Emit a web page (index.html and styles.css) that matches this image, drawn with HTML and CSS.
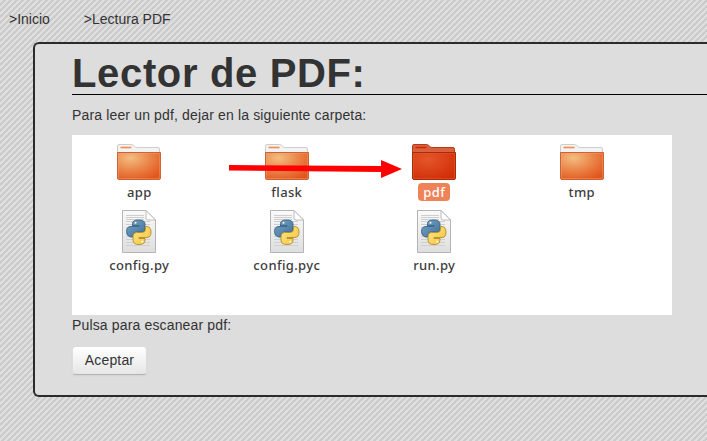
FILE: index.html
```
<!DOCTYPE html>
<html lang="es">
<head>
<meta charset="utf-8">
<title>Lector de PDF</title>
<link rel="stylesheet" href="styles.css">
</head>
<body>
<svg class="defs" width="0" height="0" aria-hidden="true">
  <defs>
    <radialGradient id="orange" cx=".3" cy=".2" r=".9"><stop offset="0" stop-color="#f3bd80"/><stop offset=".55" stop-color="#ea8145"/><stop offset="1" stop-color="#e2551c"/></radialGradient>
    <radialGradient id="red" cx=".35" cy=".25" r=".8"><stop offset="0" stop-color="#e4562a"/><stop offset="1" stop-color="#d22f08"/></radialGradient>
    <linearGradient id="paper" x2="0" y2="1"><stop offset="0" stop-color="#fafafa"/><stop offset="1" stop-color="#dedede"/></linearGradient>
    <linearGradient id="blue" x2="1" y2="1"><stop offset="0" stop-color="#78a5c6"/><stop offset="1" stop-color="#41719a"/></linearGradient>
    <linearGradient id="yellow" x2="1" y2="1"><stop offset="0" stop-color="#ffe68b"/><stop offset="1" stop-color="#f0c33c"/></linearGradient>
    <symbol id="folder" viewBox="0 0 46 38">
      <path d="M1.5 12V3Q1.5 1.5 3 1.5H15.500C18 1.500 18.500 4.500 21 4.500H42Q43.500 4.500 43.500 6V12Z" fill="#f3f3f3" stroke="#cdcdcd"/>
      <path d="M4.500 4.500H15.500" stroke="#f48b51" stroke-width="1.600"/>
      <path d="M1.500 9.500H44.500V35Q44.500 36.500 43 36.500H3Q1.500 36.500 1.500 35Z" fill="url(#orange)" stroke="#cc6237"/>
      <path d="M2.500 10.500H43.500V35.500H2.500Z" fill="none" stroke="#f5a570" stroke-opacity=".4"/>
    </symbol>
    <symbol id="folder-selected" viewBox="0 0 46 38">
      <path d="M1.500 12V3Q1.500 1.500 3 1.500H15.500C18 1.500 18.500 4.500 21 4.500H42Q43.500 4.500 43.500 6V12Z" fill="#d9623e" stroke="#b53a1a"/>
      <path d="M4.500 4.500H15.500" stroke="#c92d05" stroke-width="1.600"/>
      <path d="M1.500 9.500H44.500V35Q44.500 36.500 43 36.500H3Q1.500 36.500 1.500 35Z" fill="url(#red)" stroke="#a92a0b"/>
      <path d="M2.500 10.500H43.500V35.500H2.500Z" fill="none" stroke="#ed6337" stroke-opacity=".4"/>
    </symbol>
    <symbol id="python" viewBox="0 0 36 45">
      <path d="M1.500 1.500H25L34.500 11V43.500H1.500Z" fill="url(#paper)" stroke="#b4b4b4"/>
      <path d="M5 6.500H23M5 8.500H23M5 10.500H23M5 12.500H29M5 15.500H29M5 18.500H29M5 21.500H29M5 24.500H29M5 27.500H29M5 30.500H29M5 33.500H29M5 36.500H29" stroke="#cfcfcf"/>
      <path d="M25 1.500V9Q25 11 27 11H34.500Z" fill="#fff" stroke="#bcbcbc"/>
      <path d="M11.500 17V14.500Q11.500 11 17.500 11Q24 11 24 15V20Q24 23 21 23H15.500Q12 23 12 26V28H9.500Q5.500 27 5.500 22.500Q5.500 17.500 10 17.500H18V16.500H11.500Z" fill="url(#blue)" stroke="#386384" stroke-width=".9"/>
      <path d="M24.500 17.500H26Q30 18 30 23Q30 28.500 26 28.500H18V29.500H24V31Q24 35.500 18 35.500Q12 35.500 12 31V27Q12 23.500 15.500 23.500H21Q24.500 23.500 24.500 20.500Z" fill="url(#yellow)" stroke="#b38b24" stroke-width=".9"/>
      <circle cx="14.500" cy="13.800" r="1" fill="#fff"/><circle cx="21.300" cy="32.700" r="1" fill="#fff"/>
    </symbol>
  </defs>
</svg>
<nav class="menu"><a>&gt;Inicio</a><a>&gt;Lectura PDF</a></nav>
<main class="panel">
  <h1>Lector de PDF:</h1>
  <p class="intro">Para leer un pdf, dejar en la siguiente carpeta:</p>
  <section class="files">
    <div class="file"><svg class="folder"><use href="#folder"/></svg><span>app</span></div>
    <div class="file"><svg class="folder"><use href="#folder"/></svg><span>flask</span></div>
    <div class="file selected"><svg class="folder"><use href="#folder-selected"/></svg><span>pdf</span></div>
    <div class="file"><svg class="folder"><use href="#folder"/></svg><span>tmp</span></div>
    <div class="file"><svg class="script"><use href="#python"/></svg><span>config.py</span></div>
    <div class="file"><svg class="script"><use href="#python"/></svg><span>config.pyc</span></div>
    <div class="file"><svg class="script"><use href="#python"/></svg><span>run.py</span></div>
    <svg class="arrow" viewBox="0 0 173 20"><path d="M0 6L152 7V1L173 10L152 19V13L0 11.500Z" fill="#f00"/></svg>
  </section>
  <p class="scan">Pulsa para escanear pdf:</p>
  <button>Aceptar</button>
</main>
</body>
</html>
```
FILE: styles.css
```
* { box-sizing: border-box; }
body {
  margin: 0;
  height: 441px;
  overflow: hidden;
  color: #333;
  font: 14px/20px "Liberation Sans", Arial, sans-serif;
  background: repeating-linear-gradient(135deg, #dfdfdf 0 2.4px, #cbcbcb 2.4px 4.243px);
}
.defs { position: absolute; }
.menu { display: flex; gap: 34px; height: 42px; padding: 9px 9px 0; }
.panel {
  height: 355px;
  margin-left: 33px;
  padding: 8px 0 0 37px;
  border: 2px solid #2b2b2b;
  border-right: 0;
  border-radius: 6px 0 0 6px;
  background: #ddd;
}
h1 {
  height: 43px;
  margin: 0;
  border-bottom: 1px solid #000;
  font-size: 40px;
  line-height: 43px;
  letter-spacing: .65px;
  white-space: nowrap;
}
p { margin: 0; letter-spacing: .15px; }
.intro { margin: 10px 0; }
.files {
  position: relative;
  display: grid;
  grid-template-columns: repeat(4, 147.500px);
  grid-template-rows: 66px 72px;
  width: 600px;
  height: 180px;
  padding-top: 8px;
  background: #fff;
}
.file {
  display: flex;
  flex-direction: column;
  align-items: center;
  margin-left: -13px;
  color: #3c3c3c;
  font: 500 13px/18px "Noto Sans", "Open Sans", sans-serif;
  letter-spacing: .35px;
}
.folder { width: 46px; height: 38px; }
.script { width: 36px; height: 45px; }
.file span { margin-top: 2px; padding: 0 5px; border-radius: 4px; }
.selected span { color: #fff; background: #f08258; }
.arrow { position: absolute; left: 157px; top: 24px; width: 173px; height: 20px; }
button {
  display: block;
  width: 75px;
  height: 29px;
  margin-top: 11px;
  padding: 0 0 1px;
  border: 1px solid #ddd;
  border-bottom-color: #b3b3b3;
  border-radius: 4px;
  color: #333;
  font: inherit;
  letter-spacing: .15px;
  background: linear-gradient(#fff, #e6e6e6);
  box-shadow: inset 0 1px 0 #fff, 0 1px 2px rgba(0,0,0,.05);
}
```
